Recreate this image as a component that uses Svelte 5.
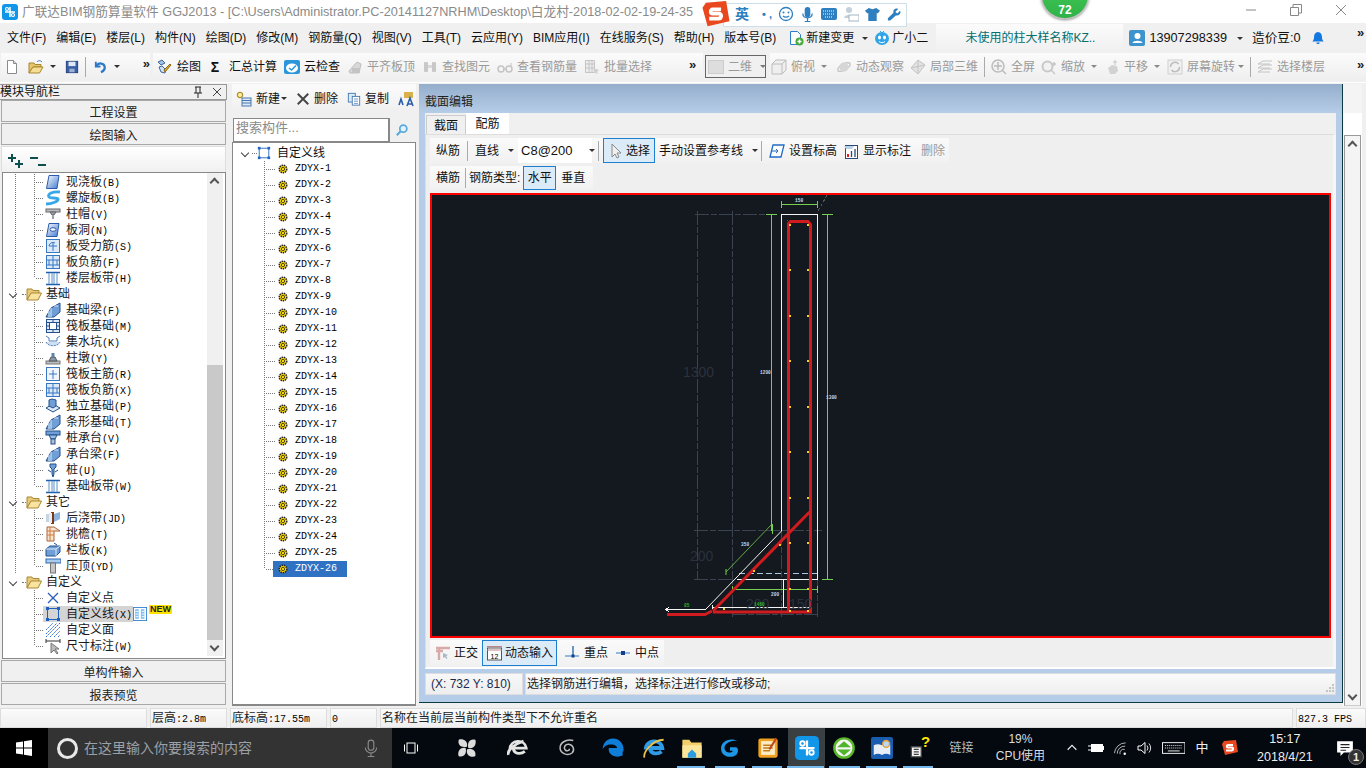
<script>
const I = {
  gld: '<rect x="0" y="0" width="16" height="16" rx="3" fill="#1296e8"/><path d="M8 3v10M3 8h10" stroke="#fff" stroke-width="1.500" fill="none"/><circle cx="5" cy="5" r="1.500" fill="none" stroke="#fff" stroke-width="1.200"/><circle cx="11" cy="11" r="1.500" fill="none" stroke="#fff" stroke-width="1.200"/>',
  doc: '<path d="M3.500 1.500h6l3 3v10h-9z" fill="#fff" stroke="#8a8a8a"/><path d="M9.500 1.500v3h3" fill="#ddd" stroke="#8a8a8a"/>',
  open: '<path d="M1 4h5l1 1.500h6V8H5L1 14z" fill="#e8c56a" stroke="#a98733"/><path d="M5 8h10l-3.500 6H1z" fill="#f6dd94" stroke="#a98733"/><path d="M9 3c1-1.500 3-2 5 0" fill="none" stroke="#3f78b5"/>',
  save: '<rect x="1.500" y="1.500" width="13" height="13" fill="#3a5fa8" stroke="#1f3a78"/><rect x="4" y="2" width="8" height="5" fill="#dfe8f4"/><rect x="5" y="10" width="6" height="4" fill="#9ab0cf"/>',
  undo: '<path d="M3 3v5h5" fill="none" stroke="#2e78c8" stroke-width="2"/><path d="M3.500 7.500C6 3.500 12 4 12.500 8.500c.2 2.500-1.500 4.500-4 5.500" fill="none" stroke="#2e78c8" stroke-width="2.400"/>',
  draw: '<path d="M2 3l4-2 3 3-4 2z" fill="#9fc1e4" stroke="#40679a"/><path d="M3 8l2 5 4 1 1-3-4-4z" fill="#cfe0f2" stroke="#40679a"/><path d="M8 11l6-6 1 1-6 7z" fill="#d9a52f" stroke="#8d6a16"/>',
  cloud: '<rect x="0" y="1" width="16" height="14" rx="2" fill="#2b96dc"/><ellipse cx="8" cy="9" rx="6" ry="4.500" fill="#fff"/><path d="M5 9l2.500 2L12 6.500" fill="none" stroke="#2b96dc" stroke-width="1.500"/>',
  flush: '<path d="M2 12l8-9 4 2-2 9H3z" fill="#d8d8d8" stroke="#bdbdbd"/><rect x="5" y="9" width="8" height="5" fill="#c4c4c4"/>',
  binoc: '<rect x="2" y="3" width="4" height="10" rx="1" fill="#c8c8c8"/><rect x="10" y="3" width="4" height="10" rx="1" fill="#c8c8c8"/><rect x="6" y="6" width="4" height="3" fill="#d8d8d8"/>',
  glass: '<circle cx="4" cy="10" r="3" fill="none" stroke="#c4c4c4" stroke-width="1.500"/><circle cx="12" cy="10" r="3" fill="none" stroke="#c4c4c4" stroke-width="1.500"/><path d="M7 10h2M14 7V4" stroke="#c4c4c4"/>',
  batch: '<path d="M1.500 1.500h9v12h-9z" fill="#eee" stroke="#c4c4c4"/><path d="M1.500 5h9M1.500 9h9M5 1.500v12M8 1.500v12" stroke="#c4c4c4"/><path d="M9 9l6 2-2 2 1 2-3-1z" fill="#d0d0d0"/>',
  cube: '<path d="M1 5l4-4h10v10l-4 4H1z" fill="#efefef" stroke="#bcbcbc"/><path d="M1 5h10v10M11 5l4-4" fill="none" stroke="#bcbcbc"/>',
  orbit: '<ellipse cx="8" cy="8" rx="7" ry="3" fill="none" stroke="#c8c8c8" stroke-width="1.500" transform="rotate(-30 8 8)"/><circle cx="8" cy="8" r="4.500" fill="#d6d6d6"/>',
  part: '<path d="M8 1l7 5-7 9-7-6z" fill="#e2e2e2" stroke="#c4c4c4"/><path d="M8 1v14M1 9l14-3" stroke="#c4c4c4"/>',
  full: '<circle cx="7" cy="7" r="6" fill="#f2f2f2" stroke="#bcbcbc" stroke-width="1.500"/><path d="M7 3v8M3 7h8M11.500 11.500l3.500 3.500" stroke="#bcbcbc" stroke-width="1.500"/>',
  zoom: '<circle cx="6.500" cy="7.500" r="5" fill="#f2f2f2" stroke="#c8c8c8" stroke-width="2"/><path d="M10 11l4 4M13 3v4M11 5h4" stroke="#c8c8c8" stroke-width="1.500"/>',
  pan: '<path d="M4 9l4-3 5 1 1 5-3 3H6z" fill="#d2d2d2"/><path d="M11 1v5M9 3h4" stroke="#c8c8c8"/>',
  rot: '<rect x="1" y="1" width="14" height="14" fill="#f0f0f0" stroke="#d0d0d0"/><path d="M3.500 8a4.500 4.500 0 0 1 8-3M12.500 8a4.500 4.500 0 0 1-8 3" fill="none" stroke="#bcbcbc" stroke-width="1.500"/>',
  floors: '<path d="M1 5l5-3h9M1 9l5-3h9M1 13l5-3h9M1 5h12M1 9h12M1 13h12" fill="none" stroke="#c4c4c4"/>',
  change: '<path d="M2.500 1.500h7l3 3v10h-10z" fill="#fff" stroke="#2c80c8"/><circle cx="11.500" cy="11.500" r="4" fill="#48a83c"/><path d="M9.500 11.500h4M11.500 9.500v4" stroke="#fff" stroke-width="1.500"/>',
  mascot: '<ellipse cx="8" cy="8.500" rx="7" ry="6.500" fill="#2fa4e7"/><ellipse cx="5.500" cy="7.500" rx="1.500" ry="2" fill="#fff"/><ellipse cx="10.500" cy="7.500" rx="1.500" ry="2" fill="#fff"/><path d="M5 11.500c2 1.500 4 1.500 6 0" fill="none" stroke="#fff"/><path d="M6 1l2 2 2-2" fill="none" stroke="#2fa4e7"/>',
  user: '<rect width="16" height="16" rx="2" fill="#3d93cc"/><circle cx="8.500" cy="6" r="3" fill="#fff"/><path d="M3.500 13c.5-3 9.500-3 10 0z" fill="#fff"/>',
  bell: '<path d="M8 1c3 0 4.500 2.500 4.500 5.500 0 3 1 4 2 5.500H1.500c1-1.500 2-2.500 2-5.500C3.500 3.500 5 1 8 1z" fill="#1578e0"/><path d="M6 13c.5 2.500 3.500 2.500 4 0z" fill="#1578e0"/>',
  newc: '<circle cx="4" cy="4" r="2.800" fill="#f0cf52" stroke="#a3872a"/><path d="M2 4h4M4 2v4" stroke="#fff6c8"/><rect x="6" y="7" width="9" height="8" fill="#dce8f6" stroke="#4a78ae"/><path d="M6 9.500h9M6 12h9" stroke="#4a78ae"/>',
  cross: '<path d="M2 2l12 12M14 2L2 14" stroke="#444" stroke-width="2.200"/>',
  copy: '<rect x="1.500" y="1.500" width="8" height="10" fill="#dce9f6" stroke="#3f74ae"/><rect x="6" y="5" width="8.500" height="10" fill="#fff" stroke="#3f74ae"/><path d="M8 8h4.500M8 10.500h4.500M8 13h4.500" stroke="#5d8fc4"/>',
  abc: '<path d="M6 1h9v6H6z" fill="#d9b04a"/><path d="M1 14l2-6 2 6M9 15l3-8 3 8M10 13h4" fill="none" stroke="#2a5ea8" stroke-width="1.600"/>',
  search: '<circle cx="9.500" cy="6.500" r="4" fill="#e4f2fc" stroke="#5aa9dc" stroke-width="2"/><path d="M6.500 9.500L2 14" stroke="#5aa9dc" stroke-width="2.400"/>',
  folder: '<path d="M1 3h5l1 1.500h6V8H5L1 14z" fill="#e8c97a" stroke="#a98733"/><path d="M5 7h10.500L12 14H1z" fill="#f9e3a0" stroke="#a98733"/>',
  line: '<rect x="2.500" y="2.500" width="11" height="11" fill="none" stroke="#1d62c2"/><rect x="1" y="1" width="3" height="3" fill="#1d62c2"/><rect x="12" y="1" width="3" height="3" fill="#1d62c2"/><rect x="1" y="12" width="3" height="3" fill="#1d62c2"/><rect x="12" y="12" width="3" height="3" fill="#1d62c2"/>',
  gear: '<circle cx="8" cy="8" r="5" fill="#ffd900" stroke="#222" stroke-width="2" stroke-dasharray="2 1"/><circle cx="8" cy="8" r="2.200" fill="#ffd900" stroke="#222"/>',
  slab: '<path d="M4 1.500h10L12 14.500H1.500z" fill="url(#g)" stroke="#2c5aa8"/>',
  spiral: '<path d="M15 2C8 1 2 4 4 7c2 2 8 0 9 2s-6 5-12 5" fill="none" stroke="#37a7e8" stroke-width="2.800"/>',
  capital: '<rect x="1" y="3" width="14" height="3" fill="#b8bcc2" stroke="#666"/><path d="M5 6h6l-2 3H7z" fill="#9aa0a8" stroke="#666"/><rect x="7" y="9" width="2" height="4" fill="#9aa0a8"/>',
  hole: '<path d="M4 1.500h10L12 14.500H1.500z" fill="url(#g)" stroke="#2c5aa8"/><ellipse cx="8" cy="7.500" rx="3" ry="1.800" fill="#fff" stroke="#2c5aa8"/>',
  force: '<rect x="1.500" y="1.500" width="13" height="13" fill="#dbe9f8" stroke="#3877c4"/><path d="M8 4v9M4 8h8" stroke="#3877c4"/><path d="M4 8a4 4 0 0 1 6-3" fill="none" stroke="#3877c4"/>',
  neg: '<rect x="1.500" y="1.500" width="13" height="13" fill="#dbe9f8" stroke="#3877c4"/><path d="M1.500 6h13M1.500 11h13M8 1.500v13M4 6v5M12 6v5" stroke="#3877c4"/>',
  band: '<path d="M1 2.500h14M1 14.500h14" stroke="#1e5fb0" stroke-width="1.600"/><path d="M4 3v11M7 3v11M9 3v11M12 3v11" stroke="#5a8fc9"/>',
  beam: '<path d="M1 15l5-9 9-5v9l-6 5z" fill="#6f9fd6" stroke="#234f8c"/><path d="M6 6v9M9 4l4 0" stroke="#dce9f8"/><rect x="3" y="9" width="3" height="6" fill="#9cc0e4"/>',
  raft: '<rect x="1.500" y="1.500" width="13" height="13" fill="#dbe9f8" stroke="#234f8c"/><rect x="4.500" y="4.500" width="7" height="7" fill="#fff" stroke="#234f8c"/><path d="M8 1.500v3M8 11.500v3M1.500 8h3M11.500 8h3M1.500 4.500h3M11.500 4.500h3M1.500 11.500h3M11.500 11.500h3" stroke="#234f8c"/>',
  pit: '<path d="M1 2l3 2v3h8V4l3-2" fill="none" stroke="#4d7fbd"/><path d="M1 8c2 5 12 5 14 0" fill="#cfe0f2" stroke="#4d7fbd" stroke-dasharray="2 1"/>',
  pier: '<rect x="1" y="11" width="14" height="3" fill="#b8bcc2" stroke="#777"/><path d="M4 11l2-4h4l2 4z" fill="#8c98a8" stroke="#555"/><rect x="6.500" y="3" width="3" height="4" fill="#5d83b0"/>',
  main: '<rect x="1.500" y="1.500" width="13" height="13" fill="#f1f6fc" stroke="#3877c4"/><path d="M8 4v9M4 8h8" stroke="#3877c4"/>',
  foot: '<path d="M1 10l7-4 7 4-7 4z" fill="#dbe9f8" stroke="#234f8c"/><path d="M4 2l3-1 4 1v6l-3 2-4-2z" fill="#6f9fd6" stroke="#234f8c"/>',
  pcap: '<rect x="1" y="1" width="14" height="4" fill="#6f9fd6" stroke="#234f8c"/><path d="M4 5l2 4h4l2-4z" fill="#9cc0e4" stroke="#234f8c"/><rect x="6" y="9" width="4" height="5" fill="#aebfd6" stroke="#234f8c"/>',
  pile: '<path d="M5 2h6v3l-2 2v5l-1 3-1-3V7L5 5z" fill="#6f9fd6" stroke="#234f8c"/><path d="M3 8l3 2M13 8l-3 2" stroke="#234f8c"/>',
  cast: '<path d="M1 4h8v8H1z" fill="#c7d4e2"/><path d="M6 2h3v12H6z" fill="#7a3a16"/><path d="M4 3h3v10H4z" fill="#e9eef6"/><path d="M9 4l6-2v7l-6 3z" fill="#8db3dc"/>',
  eave: '<path d="M2 1h7l6 4H9v10H2z" fill="#f6e4d2" stroke="#a9653a"/><path d="M2 5h7M2 9h7M5 1v14" stroke="#d27a3a"/>',
  para: '<path d="M1 7l4-3h10v6l-4 4H1z" fill="#6f9fd6" stroke="#234f8c"/><path d="M1 7h10v7M11 7l4-3" fill="none" stroke="#dce9f8"/><path d="M9 1l3 2" stroke="#234f8c"/>',
  coping: '<rect x="1" y="1" width="15" height="4" fill="#a9cbee" stroke="#2e6ab4"/><rect x="5.500" y="5" width="5" height="10" fill="#c6c6c6" stroke="#777"/>',
  point: '<path d="M3 3l10 10M13 3L3 13" stroke="#2a5eb8" stroke-width="1.300"/><circle cx="8" cy="8" r="1" fill="#2a5eb8"/>',
  hatch: '<path d="M1 8l7-7M1 12l11-11M1 15l14-14M5 15l10-10M9 15l6-6M13 15l2-2" stroke="#2a6bd0" stroke-dasharray="2 1"/>',
  dim: '<path d="M1 1v4M15 1v4M1 3h14" stroke="#333"/><path d="M6 5v10l3-3 3 4 1-1-3-4h4z" fill="#bbb" stroke="#777"/>',
  multi: '<rect x=".5" y=".5" width="15" height="15" fill="#fff" stroke="#2f7fd0"/><rect x="2.500" y="2.500" width="4" height="11" fill="#7fc0f2"/><rect x="9" y="2.500" width="4" height="11" fill="#7fc0f2"/><path d="M3 5h3M3 8h3M3 11h3M10 5h3M10 8h3M10 11h3" stroke="#fff"/>',
  cursor: '<path d="M4 1v13l3-3 2 4 2-1-2-4h4z" fill="#f0f0f0" stroke="#888"/>',
  elev: '<path d="M4 2h11l-3 12H1z" fill="#fff" stroke="#1f6cc4" stroke-width="1.300"/><path d="M3 8h6l-2-2M9 8l-2 2" fill="none" stroke="#1f6cc4"/>',
  show: '<rect x="2.500" y="2.500" width="12" height="13" fill="#fff" stroke="#2a4a78"/><path d="M1 3h10l-2 3H3z" fill="#bcd0e6"/><path d="M5 14v-3" stroke="#d22" stroke-width="2"/><path d="M8.500 14V8M12 14V6" stroke="#2a4a78" stroke-width="1.300"/>',
  ortho: '<path d="M1 3h14M4 3v12M1 6h7" stroke="#d9a8a8" stroke-width="2.400"/><path d="M8 8l5 2-2 1 1.500 2-1 1-1.500-2-2 1z" fill="#a8b8c8"/>',
  dyn: '<rect x="1.500" y="3" width="14" height="12" fill="#fff" stroke="#555"/><path d="M1 1.500h15M1 5h15" stroke="#c48282"/><text x="8.500" y="13.500" font-size="7" text-anchor="middle" font-family="Liberation Sans">12</text>',
  perp: '<path d="M1 11h14" stroke="#6fa5d8" stroke-width="1.500"/><path d="M9 1v10" stroke="#1f5fb0" stroke-width="1.300"/><rect x="7.500" y="9.500" width="3" height="3" fill="#153f88"/>',
  mid: '<path d="M1 8h14" stroke="#6fa5d8" stroke-width="1.500"/><rect x="6" y="6" width="4" height="4" fill="#153f88"/>',
  win: '<path d="M0 2.500l7-1V7.500H0zM8 1.300L16 0v7.500H8zM0 8.500h7v6l-7-1zM8 8.500h8V16l-8-1.200z" fill="#fff"/>',
  mic: '<rect x="5.500" y="1" width="5" height="9" rx="2.500" fill="none" stroke="#8a8a8a"/><path d="M3 7.500a5 5 0 0 0 10 0M8 13v2M5 15.500h6" fill="none" stroke="#8a8a8a"/>',
  tview: '<rect x="4" y="3" width="8" height="10" fill="none" stroke="#fff"/><path d="M1.500 4.500v7M14.500 4.500v7" stroke="#fff"/>',
  fan: '<path d="M8 7C4 8 1 6 2 2c2-1 7 0 6 5zM9 8c-1-4 1-7 5-6 1 2 0 7-5 6zM8 9c4-1 7 1 6 5-2 1-7 0-6-5zM7 8c1 4-1 7-5 6-1-2 0-7 5-6z" fill="#dcdcdc"/>',
  iew: '<path d="M2 9c0-7 11-8 12-1H4.500c.5 5 6 4.500 8.500 2.500M1 13c-1-3 4-8 11-10" fill="none" stroke="#e4e4e4" stroke-width="2"/>',
  spir: '<path d="M13 2C7 .5 2 4 2.500 8.500c.5 4 6 6 9.500 3.500 2.500-2.500 1-6.500-2.500-7-3-.3-4.500 2.500-3 4.500 1.500 1.500 3.500.5 3.500-1" fill="none" stroke="#bdbdbd" stroke-width="1.200"/>',
  edge: '<path d="M8 1C3 1 .5 5 .5 9c1-2.500 4-4 7-3.500 2.500.3 3.500 1.800 3.500 2.500H5c-1 4 4 8 10 5.500v-3H15.500C16.500 5.500 13 1 8 1z" fill="#0f7ed8"/>',
  ie: '<path d="M2 9c0-7 11-8 12-1H5c.5 5 6 4.500 8.500 2.500" fill="none" stroke="#2f9be4" stroke-width="2.800"/><path d="M1 15c-1-4 6-13 14-13" fill="none" stroke="#e8c14a" stroke-width="1.300"/>',
  file: '<path d="M1 2h5l1.500 2H15v11H1z" fill="#f3cf6b"/><rect x="1" y="6" width="14" height="9" fill="#fbe59a"/><path d="M5 12l3-3 3 3v3H5z" fill="#2d9be0"/>',
  gl: '<path d="M14 3C8 0 1 3 1.500 9c.5 5 7 7 11 4 2-2 1.500-5 0-5.500H8v2.500h2c0 2-6 2-6-2s6-6 10-5z" fill="#1e96e8"/>',
  note: '<rect x="1" y="1" width="14" height="14" rx="1.500" fill="#efa020"/><rect x="3" y="3" width="10" height="10" fill="#fbecc5"/><path d="M4.500 6h7M4.500 8h7M4.500 10h5" stroke="#c27e1e"/><path d="M14 1L9 9" stroke="#c0471e" stroke-width="1.500"/>',
  ball: '<circle cx="8" cy="8" r="7" fill="#f4f4f4" stroke="#58b82a" stroke-width="1.800"/><path d="M3 7.500h10L8 3zM3 9h10l-5 4.500z" fill="#4db528"/>',
  book: '<rect width="16" height="16" rx="1.500" fill="#1a5cb0"/><path d="M2 6c2-1 4-1 6 0 2-1 4-1 6 0v7c-2-1-4-1-6 0-2-1-4-1-6 0z" fill="#e7eef8"/><circle cx="11" cy="5" r="2.500" fill="#bcd7f2" stroke="#e8a030"/>',
  tip: '<path d="M1 7h8v8H1z" fill="#f2f2f2" stroke="#444"/><path d="M3 9h4M3 11h4M3 13h4" stroke="#444"/>',
  up: '<path d="M3 10l5-5 5 5" fill="none" stroke="#e6e6e6" stroke-width="1.400"/>',
  batt: '<rect x="3" y="4" width="12" height="8" fill="#fff"/><rect x="15" y="6" width="1" height="4" fill="#fff"/><path d="M0 6h3M0 10h3" stroke="#fff"/>',
  wifi: '<path d="M1.500 13a12 12 0 0 1 12-11M4.500 13.500a8 8 0 0 1 8.500-8M7.500 14a4 4 0 0 1 5-5" fill="none" stroke="#bbb"/><circle cx="12.500" cy="13.500" r="1.300" fill="#fff"/>',
  spk: '<path d="M1 6h3l4-3.500v11L4 10H1z" fill="none" stroke="#fff"/><path d="M10 5.500a4 4 0 0 1 0 5M12 3.500a7 7 0 0 1 0 9" fill="none" stroke="#ddd"/>',
  kbd: '<rect x=".5" y="2.500" width="23" height="11" fill="none" stroke="#eee"/><path d="M3 5.500h18M3 8h18" stroke="#eee" stroke-dasharray="1 1"/><path d="M6 11h12" stroke="#eee"/>',
  msg: '<path d="M1 2h14v10H7l-3 3v-3H1z" fill="#fff"/><path d="M4 5h8M4 7.500h8M4 10h5" stroke="#222"/>',
  sg: '<path d="M2 1l12-1 2 12-13 3L0 4z" fill="#e9471e"/><path d="M11 5H6c-1.500 0-1.500 2.500 0 2.500h4c1.500 0 1.500 3-.5 3H4" fill="none" stroke="#fff" stroke-width="2.200"/>',
  smile: '<circle cx="8" cy="8" r="6.500" fill="#fff" stroke="#2d7fc0" stroke-width="1.300"/><circle cx="5.500" cy="6.500" r="1" fill="#2d7fc0"/><circle cx="10.500" cy="6.500" r="1" fill="#2d7fc0"/><path d="M5 10c1.500 1.500 4.500 1.500 6 0" fill="none" stroke="#2d7fc0" stroke-width="1.200"/>',
  smic: '<rect x="5" y="0" width="6" height="11" rx="3" fill="#2d7fc0"/><path d="M3 7c0 6 10 6 10 0M8 12v3M5 15.500h6" fill="none" stroke="#2d7fc0" stroke-width="1.300"/>',
  skb: '<rect x="0" y="2" width="16" height="12" rx="2" fill="#2d7fc0"/><path d="M2 5h12M2 8h12M4 11h8" stroke="#fff" stroke-dasharray="1 1"/>',
  scard: '<circle cx="6" cy="4" r="3" fill="#c3cfd9"/><path d="M1 12c0-4 9-4 9 0z" fill="#c3cfd9"/><rect x="6" y="9" width="10" height="6" fill="#fff" stroke="#9fb5c6"/>',
  shirt: '<path d="M4 1l4 1.500L12 1l4 3-2.500 3-1-1v9h-9V6l-1 1L0 4z" fill="#2d7fc0"/>',
  wrench: '<path d="M15 4l-3 3-2-2 3-3c-3-1.500-6 1-5 4L2 12v2.500h2.500L10.500 9c3 1 6-2 4.500-5z" fill="#2d7fc0"/>'
};

const menu = ['文件(F)','编辑(E)','楼层(L)','构件(N)','绘图(D)','修改(M)','钢筋量(Q)','视图(V)','工具(T)','云应用(Y)','BIM应用(I)','在线服务(S)','帮助(H)','版本号(B)'];

const tools = [
  ['draw','绘图',0],['','汇总计算',0],['cloud','云检查',0],
  ['flush','平齐板顶',1],['binoc','查找图元',1],['glass','查看钢筋量',1],['batch','批量选择',1]
];
const views = [
  ['full','全屏',0],['zoom','缩放',1],['pan','平移',1],['rot','屏幕旋转',1]
];

const T = (icon, cn, la = '', kind = 'c', root = true, last = false) => ({ icon, cn, la, kind, root, last });
const tree = [
  T('slab','现浇板','(B)'),T('spiral','螺旋板','(B)'),T('capital','柱帽','(V)'),T('hole','板洞','(N)'),
  T('force','板受力筋','(S)'),T('neg','板负筋','(F)'),T('band','楼层板带','(H)','c',true,true),
  T('folder','基础','','f'),
  T('beam','基础梁','(F)'),T('raft','筏板基础','(M)'),T('pit','集水坑','(K)'),T('pier','柱墩','(Y)'),
  T('main','筏板主筋','(R)'),T('neg','筏板负筋','(X)'),T('foot','独立基础','(P)'),T('beam','条形基础','(T)'),
  T('pcap','桩承台','(V)'),T('beam','承台梁','(F)'),T('pile','桩','(U)'),T('band','基础板带','(W)','c',true,true),
  T('folder','其它','','f'),
  T('cast','后浇带','(JD)'),T('eave','挑檐','(T)'),T('para','栏板','(K)'),T('coping','压顶','(YD)','c',true,true),
  T('folder','自定义','','f',false),
  T('point','自定义点','','c',false),T('line','自定义线','(X)','s',false),T('hatch','自定义面','','c',false),T('dim','尺寸标注','(W)','c',false,true)
];
const zdyx = Array.from({ length: 26 }, (_, i) => 'ZDYX-' + (i + 1));
const dots = [225,270,316,361,407,452,498,543,589,611];
const underline = [[677,28],[715,30],[752,30],[787,37],[829,31],[866,31],[903,30]];
</script>

{#snippet ic(n, s = 16)}
  <svg class="ic" width={s} height={s} viewBox="0 0 16 16">{@html I[n]}</svg>
{/snippet}

<svg class="defs" width="0" height="0"><defs><linearGradient id="g" x1="0" y1="0" x2="1" y2="1"><stop offset="0" stop-color="#fff"/><stop offset="1" stop-color="#3e78d0"/></linearGradient></defs></svg>

<div class="app">
  <header class="title">
    <span class="logo">{@render ic('gld',16)}</span>
    <span class="ttext">广联达BIM钢筋算量软件 GGJ2013 - [C:\Users\Administrator.PC-20141127NRHM\Desktop\白龙村-2018-02-02-19-24-35</span>
    <div class="wctl">
      <svg width="12" height="12" viewBox="0 0 12 12"><path d="M1 6h10" stroke="#888"/></svg>
      <svg width="12" height="12" viewBox="0 0 12 12"><path d="M.5 3.500h8v8h-8zM3 3V.5h8.500V9H9" fill="none" stroke="#888"/></svg>
      <svg width="12" height="12" viewBox="0 0 12 12"><path d="M1 1l10 10M11 1L1 11" stroke="#888"/></svg>
    </div>
  </header>

  <div class="ball"><span>72</span></div>

  <div class="sogou">
    <span class="slogo"><svg width="28" height="27" viewBox="0 0 16 16">{@html I.sg}</svg></span>
    <b>英</b><span class="punc">• ,</span>
    {@render ic('smile',16)}{@render ic('smic',15)}{@render ic('skb',16)}{@render ic('scard',16)}{@render ic('shirt',15)}{@render ic('wrench',15)}
  </div>

  <nav class="menu">
    {#each menu as m}<span>{m}</span>{/each}
    <span class="mi first">{@render ic('change',16)}新建变更<i class="arr"></i></span>
    <span class="mi">{@render ic('mascot',16)}广小二</span>
    <span class="notice">未使用的柱大样名称KZ..</span>
    <span class="acct">{@render ic('user',16)}13907298339<i class="arr"></i></span>
    <span class="beans">造价豆:0</span>
    {@render ic('bell',14)}
    <span class="more">»</span>
  </nav>

  <div class="tools">
    <div class="tg g1">
      {@render ic('doc')}<span class="s1"></span>{@render ic('open')}<i class="arr"></i>{@render ic('save',14)}
      <span class="vd"></span>{@render ic('undo',15)}<i class="arr"></i><span class="more">»</span>
    </div>
    <div class="tg g2">
      {#each tools as [icon, label, off]}
        <span class="ti" class:off>
          {#if icon}{@render ic(icon)}{:else}<b class="sigma">Σ</b>{/if}{label}
        </span>
      {/each}
      <span class="more">»</span>
    </div>
    <div class="combo"><i class="flat"></i>二维<i class="arr"></i></div>
    <div class="tg g3">
      <span class="ti off">{@render ic('cube')}俯视<i class="arr"></i></span>
      <span class="ti off">{@render ic('orbit')}动态观察</span>
      <span class="ti off">{@render ic('part')}局部三维</span>
      <span class="vd"></span>
      {#each views as [icon, label, a]}
        <span class="ti off" class:short={icon === 'rot'}>{@render ic(icon)}{label}{#if a}<i class="arr"></i>{/if}</span>
      {/each}
      <span class="vd"></span>
      <span class="ti off">{@render ic('floors')}选择楼层</span>
      <span class="more end">»</span>
    </div>
  </div>

  <main class="body">
    <aside class="nav">
      <div class="navh"><span>模块导航栏</span>
        <svg width="10" height="12" viewBox="0 0 10 12"><path d="M2 1h6M3 1v6M7 1v6M1 7h8M5 7v5" stroke="#222" fill="none"/></svg>
        <svg width="10" height="10" viewBox="0 0 10 10"><path d="M1 1l8 8M9 1L1 9" stroke="#444"/></svg>
      </div>
      <button class="navb">工程设置</button>
      <button class="navb">绘图输入</button>
      <div class="plus">
        <svg width="18" height="16" viewBox="0 0 18 16"><path d="M5 1v8M1 5h8M12 7v8M8 11h8" stroke="#0d4f4f" stroke-width="2"/></svg>
        <svg width="18" height="16" viewBox="0 0 18 16"><path d="M1 5h8M9 12h8" stroke="#0d4f4f" stroke-width="2"/></svg>
      </div>
      <div class="treebox">
        <div class="rows">
          {#each tree as r}
            <div class="row" class:r={r.root}>
              {#if r.kind === 'f'}
                <div class="folder"><i class="chev"></i><i class="dh"></i>{@render ic(r.icon)}<span class="cn">{r.cn}</span></div>
              {:else}
                <div class="child" class:last={r.last}>
                  <span class="lab" class:sel={r.kind === 's'}>{@render ic(r.icon)}<span class="cn">{r.cn}<span class="la">{r.la}</span></span></span>
                  {#if r.kind === 's'}{@render ic('multi',14)}<em class="new">NEW</em>{/if}
                </div>
              {/if}
            </div>
          {/each}
        </div>
        <div class="sbar"><i class="cu"></i><div class="track"><div class="thumb"></div></div><i class="cd"></i></div>
      </div>
      <button class="navb">单构件输入</button>
      <button class="navb">报表预览</button>
    </aside>

    <section class="list">
      <div class="ltool">
        <span class="ti">{@render ic('newc')}新建<i class="arr"></i></span>
        <span class="ti">{@render ic('cross',14)}删除</span>
        <span class="ti">{@render ic('copy',14)}复制</span>
        {@render ic('abc')}
      </div>
      <div class="sr"><div class="sinput">搜索构件...</div>{@render ic('search',14)}</div>
      <div class="ltree">
        <div class="lroot"><i class="chev"></i><i class="dh"></i>{@render ic('line',14)}<span>自定义线</span></div>
        {#each zdyx as z, i}
          <div class="zrow" class:zlast={i === zdyx.length - 1}>
            <span class="zin" class:zsel={i === zdyx.length - 1}>{@render ic('gear',12)}<span class="zt">{z}</span></span>
          </div>
        {/each}
      </div>
    </section>

    <section class="dlg">
      <div class="dlgt">截面编辑</div>
      <div class="dbody">
        <div class="tabs"><span class="tab">截面</span><span class="tab on">配筋</span></div>
        <div class="panel">
          <div class="bar b1">
            <span class="bt">纵筋</span><span class="vd"></span>
            <span class="bt">直线<i class="arr"></i></span>
            <span class="spec"><span>C8@200</span><i class="arr"></i></span>
            <span class="vd v2"></span>
            <span class="bt act sel1">{@render ic('cursor')}选择</span>
            <span class="bt">手动设置参考线<i class="arr"></i></span>
            <span class="vd v3"></span>
            <span class="bt">{@render ic('elev')}设置标高</span>
            <span class="bt">{@render ic('show')}显示标注</span>
            <span class="bt dis">删除</span>
          </div>
          <div class="bar b2">
            <span class="bt">横筋</span><span class="vd"></span>
            <span class="bt tight">钢筋类型:</span>
            <span class="bt act">水平</span>
            <span class="bt">垂直</span>
          </div>
          <div class="canvas">
            <svg width="897" height="441" viewBox="433 196 897 441">
              <g shape-rendering="crispEdges" fill="none">
                <g class="dash">
                  <path d="M696 215.500H772M698.500 212V580.500M733.500 212V620M695 531.500H823M695 580.500H736M782.500 532V620M818.500 580V620M733 615.500H820"/>
                </g>
                <g stroke="#74d04c">
                  <path d="M782 205.500H819M772.500 215V532M828.500 215V580M733 590.500H819M782.500 202v7M818.500 202v7M767 215.500h11M823 215.500h11M823 580.500h11M733.500 587v7M818.500 587v7M773 525v10"/>
                </g>
                <g stroke="#f4f4f4">
                  <path d="M782.500 215.500H818.500M782.500 215V532M818.500 215V580M738 580.500H819M784.500 580V608M713 608.500H812M667 610.500H707M713 606v4M812 606v4"/>
                </g>
                <path d="M740 574.500H818" stroke="#a9c9e6" stroke-dasharray="6 3"/>
                <path d="M788 221h1M828 196l-10 18" stroke="#555" stroke-dasharray="3 2"/>
                <path d="M666 610.500l4-2M666 610.500l4 2" stroke="#fff"/>
              </g>
              <path d="M707 610L782.500 532" stroke="#f4f4f4" stroke-width="1" fill="none"/>
              <path d="M727 573L773 525" stroke="#74d04c" stroke-width=".8" fill="none"/>
              <path d="M727 570v6" stroke="#74d04c"/>
              <g stroke="#d01c1f" stroke-width="3" fill="none">
                <path d="M789.500 613V224.500l2-2H809l2.500 3V613H714"/>
                <path d="M714 612L810.500 513"/>
                <path d="M668 615.500H706L713 612"/>
              </g>
              {#each dots as y}
                <rect x="790" {y} width="2" height="2" fill="#f2d21a"/>
                <rect x="808" {y} width="2" height="2" fill="#f2d21a"/>
              {/each}
              <rect x="780" y="545" width="2" height="2" fill="#f2d21a"/>
              <rect x="754" y="571" width="2" height="2" fill="#f2d21a"/>
              <rect x="724" y="609" width="2" height="2" fill="#f2d21a"/>
              <g class="big">
                <text x="684" y="378">1300</text><text x="691" y="562">200</text>
                <text x="747" y="610">200</text><text x="790" y="610">150</text>
              </g>
              <g class="tiny">
                <text x="796" y="203">150</text><text x="761" y="375">1200</text><text x="827" y="400">1300</text>
                <text x="742" y="547">350</text><text x="772" y="597">200</text>
                <text x="685" y="608" class="tg1">85</text><text x="755" y="607" class="tg1">1460</text>
              </g>
            </svg>
          </div>
          <div class="bar b3">
            <span class="bt">{@render ic('ortho')}正交</span>
            <span class="bt act">{@render ic('dyn')}动态输入</span>
            <span class="bt p1">{@render ic('perp')}重点</span>
            <span class="bt p2">{@render ic('mid')}中点</span>
          </div>
        </div>
        <div class="dstat">
          <span class="coords">(X: 732 Y: 810)</span>
          <span class="hint">选择钢筋进行编辑，选择标注进行修改或移动;
            <svg class="grip" width="10" height="10" viewBox="0 0 10 10"><path d="M7 1h2v2H7zM4 4h2v2H4zM7 4h2v2H7zM1 7h2v2H1zM4 7h2v2H4zM7 7h2v2H7z" fill="#c4c4c4"/></svg>
          </span>
        </div>
      </div>
    </section>

    <aside class="rsb"><div class="sbar wide"><i class="cu"></i><div class="track"></div><i class="cd"></i></div></aside>
  </main>

  <footer class="status">
    <span class="c0"></span>
    <span class="c1">层高<span class="la">:2.8m</span></span>
    <span class="c2">底标高<span class="la">:17.55m</span></span>
    <span class="c3"><span class="la">0</span></span>
    <span class="c4">名称在当前层当前构件类型下不允许重名</span>
    <span class="c5"><span class="la">827.3 FPS</span></span>
  </footer>

  <div class="task">
    <div class="start">{@render ic('win',16)}</div>
    <div class="cortana"><i class="ring"></i><span>在这里输入你要搜索的内容</span>{@render ic('mic',18)}</div>
    <div class="apps">
      <span class="tv">{@render ic('tview',16)}</span>
      <span class="wide2">{@render ic('fan',22)}</span>
      <span class="wide2">{@render ic('iew',22)}</span>
      <span class="wide3">{@render ic('spir',20)}</span>
      <span class="edge">{@render ic('edge',22)}</span>
      {#each ['ie','file','gl','note'] as n}<span class="slot">{@render ic(n,22)}</span>{/each}
      <span class="slot on">{@render ic('gld',24)}</span>
      {#each ['ball','book'] as n}<span class="slot">{@render ic(n,22)}</span>{/each}
      <span class="slot tip">{@render ic('tip',20)}<b>?</b></span>
    </div>
    <div class="tray">
      <span class="lnk">链接</span>
      <span class="cpu">19%<br/>CPU使用</span>
      {@render ic('up',14)}{@render ic('batt',16)}{@render ic('wifi',15)}{@render ic('spk',16)}
      <svg width="24" height="16" viewBox="0 0 24 16">{@html I.kbd}</svg>
      <span class="ime">中</span>
      {@render ic('sg',16)}
      <span class="clock">15:17<br/>2018/4/21</span>
      <span class="act-c">{@render ic('msg',18)}<b>1</b></span>
    </div>
    {#each underline as [x, w]}
      <i class="ul" style="left:{x}px;width:{w}px"></i>
    {/each}
  </div>
</div>

<style>
:global(body){margin:0;background:#f0f0f0}
.defs{position:absolute}
.app{position:relative;width:1366px;height:768px;overflow:hidden;display:flex;flex-direction:column;font:12px/16px "Liberation Sans","Noto Sans CJK SC",sans-serif;color:#111;background:#f0f0f0}
.ic{flex:none;display:block}
.arr{display:inline-block;flex:none;width:0;height:0;border:3px solid transparent;border-top:3px solid #333;border-bottom:0;margin-left:8px}
.vd{flex:none;width:1px;height:20px;background:#aaa}
.more{font:bold 13px/10px "Liberation Sans";color:#222}
.title{height:23px;flex:none;background:#fff;display:flex;align-items:center;color:#8a8a8a;font-size:12.700px;padding-left:2px;position:relative;white-space:nowrap}
.logo{margin-right:4px}
.wctl{position:absolute;right:0;top:0;display:flex;gap:33px;padding:4px 19px 0 0}
.ball{position:absolute;left:1041px;top:-29px;width:48px;height:48px;border-radius:50%;background:linear-gradient(#4bcf58,#2fb248);border:1px solid #b8b8b8;box-shadow:0 1px 3px #888;display:flex;align-items:flex-end;justify-content:center;color:#fff;font-size:12px;font-weight:bold;z-index:3;box-sizing:border-box}
.sogou{position:absolute;left:702px;top:0;width:205px;height:28px;z-index:3;display:flex;align-items:center;gap:6px;box-sizing:border-box}
.sogou::before{content:"";position:absolute;left:21px;right:0;top:3px;height:24px;background:#fff;border:1px solid #cfdfe9;box-sizing:border-box}
.sogou>*{position:relative}
.slogo{margin-right:-4px;line-height:0}
.sogou b{color:#2d7fc0;font-size:14px;margin-left:3px}
.punc{color:#2d7fc0;font-weight:bold;font-size:11px;white-space:pre;width:17px;text-align:right;box-sizing:border-box}
.menu{height:30px;flex:none;display:flex;align-items:center;gap:10px;padding-left:7px;box-sizing:border-box;white-space:nowrap;color:#111;position:relative}
.mi{display:flex;align-items:center;gap:2px}
.mi.first{margin:0 -4px 0 2px}
.mi .arr{margin:0 0 0 6px}
.notice{margin-left:-2px;width:187px;height:28px;box-sizing:border-box;padding-left:29px;line-height:28px;background:linear-gradient(#fbfbfb,#f0f0f0);color:#036f6f}
.acct{display:flex;align-items:center;gap:4px;margin-left:-4px;font-size:12.700px}
.acct .arr{margin-left:6px}
.beans{margin-left:-1px;font-size:12.700px}
.menu>.more{position:absolute;left:1357px;top:5px}
.tools{height:30px;flex:none;display:flex;align-items:center;position:relative;background:#f0f0f0;border-bottom:1px solid #fff;box-sizing:border-box;padding-bottom:2px}
.tg{height:27px;display:flex;align-items:center;background:linear-gradient(#fbfbfb,#efefef);white-space:nowrap}
.g1{width:149px;padding-left:3px;box-sizing:border-box;margin-left:1px}
.g1 .s1{width:8px}
.g1 .arr{margin:0 9px 0 6px}
.g1 .vd{margin:0 7px 0 6px}
.g1 .more{margin:-6px 0 0 14px}
.g2{width:550px;margin-left:3px;padding-left:3px;box-sizing:border-box;gap:7px}
.g2 .more{position:absolute;left:689px;top:7px}
.g2 .ti:first-child{gap:5px}
.ti{display:inline-flex;align-items:center;gap:4px;flex:none;white-space:nowrap}
.off{color:#9a9a9a}
.off .arr{border-top-color:#888}
.sigma{width:14px;text-align:center;font-size:14px;margin-right:3px}
.combo{width:61px;height:23px;flex:none;white-space:nowrap;box-sizing:border-box;margin-left:2px;border:1px solid #666;background:#f0f0f0;display:flex;align-items:center;color:#9a9a9a;padding-left:2px;gap:4px;margin-right:4px}
.combo .arr{margin-left:4px;border-top-color:#777}
.flat{width:14px;height:12px;background:#ddd;border:1px solid #ccc;flex:none}
.g3{flex:1;gap:6px;padding-left:1px}
.g3 .vd{margin:0}
.g3 .ti .arr{margin:0 1px 0 2px}
.g3 .ti:first-child .arr{margin:0 3px 0 2px}
.g3 .ti.short .arr{margin:0 0 0 -1px}
.g3 .end{position:absolute;left:1357px;top:7px}
.body{flex:none;display:flex;align-items:stretch;height:625px}
.nav{width:227px;flex:none;display:flex;flex-direction:column;padding:1px 0 2px;box-sizing:border-box}
.navh{height:14px;flex:none;display:flex;align-items:center;border:1px solid #999;border-left:0;font-size:12px;padding-right:4px;gap:9px}
.navh span{flex:1}
.navb{height:22px;flex:none;padding:0;margin:0 0 1px 1px;width:225px;font:12px "Liberation Sans","Noto Sans CJK SC",sans-serif;color:#222;background:#f0f0f0;border:1px solid #a8a8a8;box-sizing:border-box}
.plus{height:26px;flex:none;margin-left:1px;width:225px;background:linear-gradient(#fff,#f0f0f0);border:1px solid #ddd;border-bottom:0;box-sizing:border-box;display:flex;gap:4px;align-items:center;padding:3px 0 0 5px}
.treebox{flex:1;min-height:0;margin:0 1px 1px 2px;border:1px solid #888;background:#fff;display:flex;padding:0 2px 2px 0;box-sizing:border-box}
.rows{flex:1;padding-top:1px;min-width:0;overflow:hidden;margin-left:-1px}
.row{height:16px}
.row.r{background:repeating-linear-gradient(180deg,#777 0 1px,transparent 1px 2px) 13px 0/1px 100% no-repeat}
.folder{height:16px;display:flex;align-items:center;position:relative;padding-left:24px}
.folder .cn{margin-left:4px}
.chev{position:absolute;left:8px;top:5px;width:5px;height:5px;border:solid #444;border-width:0 1.500px 1.500px 0;transform:rotate(45deg)}
.dh{position:absolute;left:20px;top:8px;width:4px;border-top:1px dotted #777}
.child{height:16px;display:flex;align-items:center;padding-left:43px;
  background:repeating-linear-gradient(180deg,#777 0 1px,transparent 1px 2px) 32px 0/1px 100% no-repeat,repeating-linear-gradient(90deg,#777 0 1px,transparent 1px 2px) 34px 8px/8px 1px no-repeat}
.child.last{background-size:1px 50%,8px 1px}
.lab{display:flex;align-items:center;gap:5px;height:16px}
.lab.sel{background:#d4d4d4;padding:0 1px 0 2px;margin-left:-2px}
.cn{white-space:nowrap;color:#1a1a1a}
.la{font:10px "Liberation Mono",monospace;font-weight:normal;color:#000}
.new{font:bold 9px/9px "Liberation Sans";color:#222;background:#ffe200;margin:-9px 0 0 2px;padding:0 1px;height:9px}
.sbar{width:16px;flex:none;display:flex;flex-direction:column;background:#f0f0f0;position:relative}
.cu,.cd{flex:none;height:16px;position:relative}
.cu::after,.cd::after{content:"";position:absolute;left:4px;top:6px;width:5px;height:5px;border:solid #555;border-width:2px 0 0 2px;transform:rotate(45deg)}
.cd::after{transform:rotate(225deg);top:3px}
.track{flex:1;position:relative}
.thumb{position:absolute;left:0;right:0;top:176px;bottom:0;background:#c9c9c9}
.list{width:184px;margin-left:5px;flex:none;display:flex;flex-direction:column;padding-top:1px;box-sizing:border-box;height:623px}
.ltool{height:29px;flex:none;display:flex;align-items:center;gap:9px;padding-left:4px;overflow:hidden;white-space:nowrap;background:linear-gradient(#fbfbfb,#efefef)}
.ltool .arr{margin-left:-3px}
.sr{height:29px;flex:none;display:flex;align-items:flex-end;gap:5px;background:#f0f0f0;padding-left:1px}
.sr .ic{margin-bottom:5px}
.sinput{width:157px;height:24px;box-sizing:border-box;border:1px solid #888;border-width:1px 2px 1px 1px;background:#fff;color:#8a8a8a;line-height:18px;font-size:13px;padding-left:2px}
.ltree{flex:1;border:2px solid #888;border-width:1px 1px 2px 1px;background:#fff;padding-top:2px;position:relative;box-sizing:border-box}
.lroot{height:16px;display:flex;align-items:center;gap:6px;position:relative;padding-left:24px}
.lroot .chev{left:9px}
.lroot .dh{left:19px;width:5px}
.zrow{height:16px;display:flex;align-items:center;padding-left:44px;background:repeating-linear-gradient(180deg,#777 0 1px,transparent 1px 2px) 31px 0/1px 100% no-repeat,repeating-linear-gradient(90deg,#777 0 1px,transparent 1px 2px) 33px 8px/10px 1px no-repeat}
.zlast{background-size:1px 50%,10px 1px}
.zin{display:flex;align-items:center;gap:6px;height:16px;padding:0 10px 0 4px;margin-left:-4px}
.zt{font:10px/16px "Liberation Mono",monospace;color:#000}
.zsel{background:#2f72c4}
.zsel .zt{color:#fff}
.dlg{width:924px;flex:none;margin:1px 0 0 3px;height:619px;display:flex;flex-direction:column;background:#b5cde8;border-right:1px solid #0c3a44;border-bottom:1px solid #0c3a44;box-sizing:border-box}
.dlgt{height:29px;flex:none;background:linear-gradient(#94aecb,#b6cde8);padding:7px 0 0 6px;box-sizing:border-box;line-height:22px;color:#222}
.dbody{flex:1;min-height:0;display:flex;flex-direction:column;padding:0 6px 7px 6px}
.tabs{height:21px;flex:none;background:#f0f0f0;display:flex;align-items:flex-end;padding-left:1px}
.tab{height:19px;width:40px;box-sizing:border-box;text-align:center;font-size:12px;line-height:20px;border:1px solid #ccc;border-bottom:0}
.tab.on{height:21px;width:43px;background:#fff;border:0;line-height:23px}
.panel{height:535px;flex:none;background:#efefef;border:1px solid #ddd;border-right:3px solid #f6f6f6;border-bottom:2px solid #fff;box-sizing:border-box;padding:3px 0 0 4px;display:flex;flex-direction:column}
.bar{display:flex;align-items:center;background:linear-gradient(#fafafa,#f1f1f1);align-self:flex-start;white-space:nowrap}
.bt{display:inline-flex;align-items:center;gap:4px;height:100%;box-sizing:border-box;padding:0 3px}
.bar .vd{margin:0 4px}
.act{background:#dcebf8;border:1px solid #1e7fd0}
.dis{color:#9a9a9a;margin-left:4px}
.b1{height:25px;padding-left:3px;width:519px;box-sizing:border-box}
.b1 .arr{margin-left:5px}
.spec{display:flex;align-items:center;width:74px;height:25px;background:#fff;margin-left:1px;position:relative;box-sizing:border-box;padding-left:3px;justify-content:space-between;font-size:13px}
.spec .arr{margin-right:-3px}
.bar .v2{margin:0 4px 0 6px}
.bar .v3{margin:0 4px 0 0}
.sel1{width:52px;height:25px;padding:0 2px 0 4px;gap:2px;margin-right:1px}
.b2{height:24px;margin-top:3px;padding:0 5px 0 3px}
.b2 .vd{margin:0 0 0 2px}
.tight{padding:0 3px 0 3px}
.b2 .act{width:33px;height:24px;padding:0;justify-content:center}
.b2 .bt:last-child{padding-left:5px}
.canvas{flex:none;margin-top:3px;width:901px;height:445px;box-sizing:border-box;border:2px solid #ff0000;background:#14181f;line-height:0;overflow:hidden}
.canvas svg{display:block}
.dash{stroke:#3b4250;stroke-dasharray:14 2 6 2}
.big text{font:14px "Liberation Sans";fill:#2b313d}
.tiny text{font:bold 4.500px "Liberation Mono";fill:#c8d8f0}
.tiny .tg1{fill:#2eb32e}
.b3{height:26px;margin-top:2px;padding-left:3px}
.b3 .bt:first-child{padding:0 3px 0 2px;gap:3px;margin-right:1px}
.b3 .act{padding:0 3px;margin-right:6px;gap:3px}
.b3 .p1{margin-right:5px;padding:0 1px}
.b3 .p2{padding:0 5px 0 1px}
.dstat{height:22px;flex:none;margin-top:4px;display:flex;gap:2px}
.coords{width:98px;box-sizing:border-box;padding-left:5px;line-height:20px;background:linear-gradient(#f8f8f8,#eee);border:1px solid #ddd;color:#1b2b50;font-size:12px}
.hint{flex:1;box-sizing:border-box;padding-left:1px;line-height:20px;background:linear-gradient(#fbfbfb,#eee);border:1px solid #ddd;position:relative;color:#222}
.grip{position:absolute;right:0;bottom:1px}
.rsb{width:19px;flex:none;padding:51px 1px 0 1px;box-sizing:border-box;display:flex;height:622px;margin-top:1px;background:linear-gradient(#f4f4f4 0 29px,#fff 29px)}
.sbar.wide{width:17px;border:1px solid #999;border-bottom-color:#ccc;background:#f4f4f4;box-sizing:border-box}
.status{height:20px;flex:none;display:flex;gap:3px;font-size:12px;background:#f0f0f0;color:#222}
.status>span{box-sizing:border-box;border:1px solid #ddd;background:linear-gradient(#fbfbfb,#efefef);padding-left:1px;line-height:19px;white-space:nowrap}
.status .la{font-size:10px}
.c0{width:147px}.c1{width:77px}.c2{width:97px}.c3{width:47px}.c4{width:913px}.c5{width:70px}
.task{height:40px;flex:none;position:relative;background:#03090f;display:flex;align-items:center;color:#eee}
.start{width:48px;height:40px;background:#000;display:flex;align-items:center;justify-content:center;flex:none}
.cortana{width:344px;height:40px;flex:none;background:#333;display:flex;align-items:center;position:relative;color:#9aa0a6;font-size:14px;box-sizing:border-box;padding:0 12px 0 9px}
.cortana span{flex:1;margin-left:6px}
.ring{width:21px;height:21px;border-radius:50%;border:3px solid #e8e8e8;box-sizing:border-box;flex:none}
.apps{display:flex;align-items:center;height:40px;flex:none}
.apps span{display:flex;justify-content:center;align-items:center;height:40px;box-sizing:border-box}
.tv{width:37px}
.wide2{width:51px}
.apps .tv+.wide2{margin-left:12px}
.wide3{width:48px}
.edge{width:44px}
.slot{width:38px}
.slot.on{background:#3a3f42;width:37px;margin-left:1px}
.tip{position:relative}
.tip b{position:absolute;left:20px;top:6px;color:#ffe600;font-size:15px}
.tray{position:absolute;left:941px;right:0;top:0;height:40px;display:flex;align-items:center;font-size:12px;gap:9px}
.lnk{width:42px;text-align:center;color:#bbb}
.cpu{width:58px;text-align:center;margin:0 7px 0 1px;line-height:17px;color:#ddd;white-space:nowrap}
.ime{width:20px;text-align:center;font-size:13px;margin:0 1px 0 -2px}
.clock{text-align:center;width:78px;line-height:18px;margin-left:0;white-space:nowrap;font-size:12.500px}
.act-c{position:relative;width:42px;height:40px;display:flex;justify-content:center;align-items:center;margin-left:-7px}
.act-c b{position:absolute;left:23px;top:21px;width:16px;height:16px;border-radius:50%;background:#333;border:1px solid #777;text-align:center;line-height:14px;box-sizing:border-box;font-size:11px}
.ul{position:absolute;top:38px;height:2px;background:#76b9ed}
</style>
